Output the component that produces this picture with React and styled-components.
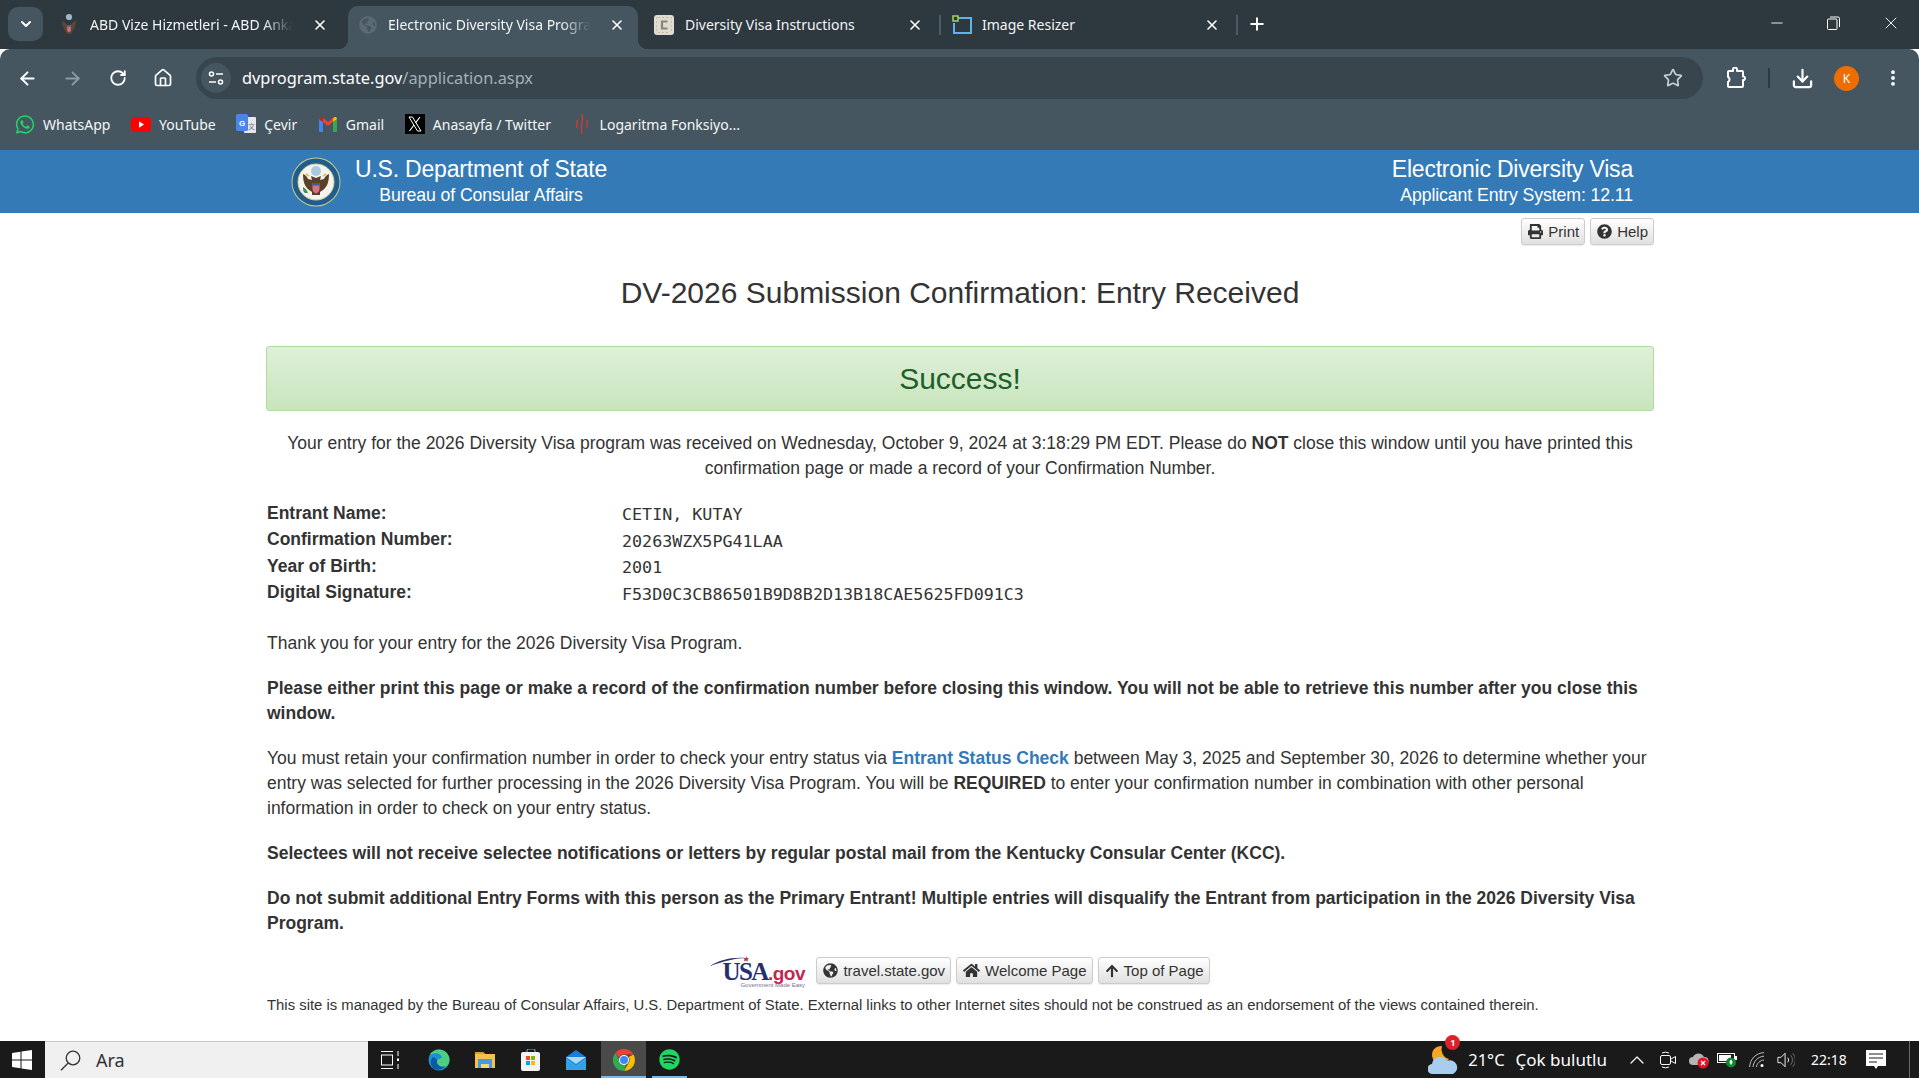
import React from "react";
import styled, { createGlobalStyle } from "styled-components";
import { FaPrint, FaQuestionCircle, FaGlobeAmericas, FaHome, FaArrowUp, FaWhatsapp, FaSpotify } from "react-icons/fa";
import { ArrowLeft, ArrowRight, RotateCw, House, Star, Download, ChevronDown, ChevronUp, X, Plus, Minus, EllipsisVertical } from "lucide-react";

const Global = createGlobalStyle`
  html, body { margin: 0; padding: 0; height: 100%; background: #fff; overflow: hidden; }
  * { box-sizing: border-box; }
  #root { height: 100%; }
`;

const Screen = styled.div`
  width: 1919px; height: 1078px; display: flex; flex-direction: column; overflow: hidden;
  font-family: "Liberation Sans", Arial, sans-serif; color: #333;
`;

/* ---------- browser chrome ---------- */
const TabStrip = styled.div`
  height: 49px; flex: none; background: #2e383f; display: flex; align-items: flex-start;
  padding-left: 8px; font-family: "Noto Sans", sans-serif; color: #fff;
`;
const TabMenu = styled.div`
  width: 35px; height: 34px; margin: 7px 5px 0 0; border-radius: 10px; background: #455661;
  display: flex; align-items: center; justify-content: center; flex: none;
`;
const Tab = styled.div`
  position: relative; width: ${p => p.$w}px; height: 43px; margin-top: 6px; margin-left: ${p => p.$ml || 0}px; flex: none;
  display: flex; align-items: center; padding: 0 ${p => p.$pr}px 6px ${p => p.$pad}px; gap: ${p => p.$gap}px;
  border-radius: 10px 10px 0 0; background: ${p => (p.$active ? "#455661" : "transparent")};
  ${p => p.$active && `
    &::before, &::after { content: ""; position: absolute; bottom: 0; width: 10px; height: 10px; }
    &::before { left: -10px; background: radial-gradient(circle at 0 0, #2e383f 10px, #455661 10.5px); }
    &::after { right: -10px; background: radial-gradient(circle at 100% 0, #2e383f 10px, #455661 10.5px); }
  `}
  ${p => p.$sep && `
    &::after { content: ""; position: absolute; right: 0; top: 9px; width: 2px; height: 20px; background: #4a5b66; }
  `}
`;
const TabIcon = styled.span`
  width: 20px; height: 20px; flex: none; display: flex; align-items: center; justify-content: center;
`;
const TabTitle = styled.span`
  flex: 1; min-width: 0; white-space: nowrap; overflow: hidden; font-size: 14px; color: #f2f4f5;
  mask-image: ${p => (p.$fade ? "linear-gradient(90deg, #000 82%, transparent 96%)" : "none")};
`;
const TabClose = styled(X)`flex: none; color: #fff;`;
const NewTab = styled.div`
  width: 38px; height: 34px; margin-top: 7px; display: flex; align-items: center; justify-content: center;
`;
const WindowControls = styled.div`
  margin-left: auto; display: flex; height: 46px;
`;
const WinButton = styled.div`
  width: 57px; height: 46px; display: flex; align-items: center; justify-content: center; color: #fff;
`;

const Toolbar = styled.div`
  height: 58px; flex: none; background: #455661; border-radius: 10px 10px 0 0;
  display: flex; align-items: center; color: #fff; padding-left: 15px;
  font-family: "Noto Sans", sans-serif;
`;
const NavButton = styled.div`
  width: 45px; height: 34px; display: flex; align-items: center; justify-content: center; flex: none;
  color: ${p => (p.$off ? "#8e9aa2" : "#fff")};
`;
const NavGroup = styled.div`display: flex; margin-left: -10px;`;
const Omnibox = styled.div`
  width: 1507px; height: 42px; margin-left: 11px; border-radius: 21px; background: #38454d; flex: none;
  display: flex; align-items: center; padding: 0 20px 0 5px;
`;
const SiteChip = styled.div`
  width: 30px; height: 30px; border-radius: 50%; background: #455661; display: flex; align-items: center; justify-content: center; flex: none;
`;
const Url = styled.div`
  margin-left: 11px; font-size: 16.35px; color: #fff; flex: 1; white-space: nowrap;
  span { color: #a5afb6; }
`;
const ActionRow = styled.div`
  display: flex; align-items: center; margin-left: 15px;
`;
const ToolDivider = styled.div`width: 2px; height: 20px; background: #2e383f; margin: 0 ${p => p.$m || 0}px;`;
const Avatar = styled.div`
  width: 25px; height: 25px; border-radius: 50%; background: #ef6c00; color: #fff; font-size: 12px;
  display: flex; align-items: center; justify-content: center; margin: 0 24px 0 0; flex: none;
`;
const ActionSlot = styled.div`
  width: ${p => p.$w}px; display: flex; align-items: center; justify-content: center; flex: none;
`;

const Bookmarks = styled.div`
  height: 43px; flex: none; background: #455661; display: flex; align-items: center; padding: 0 0 9px 15px;
  font-family: "Noto Sans", sans-serif; font-size: 14px; color: #f4f6f7;
`;
const Bookmark = styled.div`
  display: flex; align-items: center; gap: 8px; margin-right: 20.6px; white-space: nowrap;
`;
const BmIcon = styled.span`
  width: 20px; height: 20px; display: flex; align-items: center; justify-content: center; flex: none;
`;

/* ---------- page ---------- */
const Content = styled.main`flex: 1; min-height: 0; background: #fff; display: flex; flex-direction: column;`;
const SiteHeader = styled.header`
  height: 63px; flex: none; background: #337ab7; color: #fff; display: flex; align-items: center;
  justify-content: space-between; padding: 0 286px 0 291px;
`;
const Brand = styled.div`display: flex; align-items: center; gap: 14px;`;
const BrandText = styled.div`text-align: center; line-height: 1;`;
const BrandTitle = styled.div`font-size: 23px; line-height: 29px; margin-top: -2px; letter-spacing: -.2px;`;
const BrandSub = styled.div`font-size: 17.7px; line-height: 22px; letter-spacing: -.1px;`;
const SystemText = styled.div`text-align: right;`;

const Container = styled.div`width: 1388px; margin: 0 265px 0 266px; flex: 1; display: flex; flex-direction: column;`;
const TopActions = styled.div`display: flex; justify-content: flex-end; gap: 5px; margin-top: 5px; height: 27px;`;
const Btn = styled.a`
  height: 27px; display: inline-flex; align-items: center; gap: 5px; padding: 0 5px 0 6px; border: 1px solid #ccc;
  border-radius: 3px; background: linear-gradient(#fff, #e0e0e0); font-size: 15px; color: #333; white-space: nowrap;
  text-decoration: none; box-shadow: 0 1px 1px rgba(0,0,0,.08);
`;
const PageTitle = styled.h1`
  margin: 31px 0 0; font-size: 30px; line-height: 33px; font-weight: 400; text-align: center; color: #333;
`;
const SuccessPanel = styled.div`
  height: 65px; margin-top: 37px; border: 1px solid #b2dba1; border-radius: 3px;
  background: linear-gradient(#dff0d8, #c8e5bc); display: flex; align-items: center; justify-content: center;
  font-size: 30px; color: #1d5f2a;
`;
const Para = styled.p`
  margin: ${p => p.$mt ?? 20}px 0 0; font-size: 17.5px; line-height: 25px; color: #333; padding-left: ${p => (p.$center ? 0 : 1)}px;
  text-align: ${p => (p.$center ? "center" : "left")};
  font-weight: ${p => (p.$bold ? 700 : 400)};
`;
const Lead = styled(Para)`padding: 0 18px;`;
const DataTable = styled.dl`
  margin: 19px 0 0; padding-left: 1px; display: grid; grid-template-columns: 355px 1fr; grid-auto-rows: 26.5px; align-items: center;
`;
const DataLabel = styled.dt`font-size: 17.5px; font-weight: 700; color: #333;`;
const DataValue = styled.dd`
  margin: 0; font-family: "DejaVu Sans Mono", monospace; font-size: 16.7px; color: #333; padding-top: 2px;
`;
const Link = styled.a`color: #337ab7; font-weight: 700; text-decoration: none;`;
const FooterActions = styled.div`
  display: flex; align-items: center; justify-content: center; margin-top: 21px; gap: 5px; height: 27px;
`;
const Logo = styled.div`
  position: relative; width: 100px; height: 32px; margin-right: 1px; font-family: "Liberation Serif", serif; white-space: nowrap;
  svg { position: absolute; left: 0; top: 0; }
`;
const LogoWord = styled.div`
  position: absolute; left: 12px; top: 4px; font-size: 25px; line-height: 26px; letter-spacing: -1.5px; color: #26306f; font-weight: 700;
  span { color: #c2274f; font-family: "Liberation Sans", sans-serif; font-size: 19px; font-weight: 700; letter-spacing: -.5px; }
`;
const LogoTag = styled.div`
  position: absolute; left: 30px; top: 27px; font-size: 6px; line-height: 7px; color: #7a6f8f; font-family: "Liberation Sans", sans-serif;
`;
const Disclaimer = styled.p`margin: 12px 0 0; padding-left: 1px; font-size: 14.87px; line-height: 18px; color: #333; white-space: nowrap;`;

/* ---------- taskbar ---------- */
const Taskbar = styled.footer`
  height: 37px; flex: none; background: #1a1a1a; display: flex; align-items: stretch; color: #fff;
  font-family: "Noto Sans", sans-serif;
`;
const StartSlot = styled.div`width: 45px; display: flex; align-items: center; justify-content: center; flex: none; padding-right: 1px;`;
const SearchBox = styled.div`
  width: 323px; background: #f0f0f0; border-top: 1px solid #c8c8c8; display: flex; align-items: center; gap: 15px;
  padding-left: 15px; font-size: 18px; color: #333; flex: none;
`;
const TaskApp = styled.div`
  position: relative; width: ${p => p.$w}px; margin-left: ${p => p.$ml || 0}px; display: flex; align-items: center; justify-content: center; flex: none;
  background: ${p => (p.$active ? "#4a4a4a" : "transparent")};
  ${p => p.$run && `
    &::after { content: ""; position: absolute; left: 0; right: 0; bottom: 0; height: 2px; background: #76b9ed; }
  `}
`;
const Tray = styled.div`margin-left: auto; display: flex; align-items: center; flex: none;`;
const TraySlot = styled.div`
  position: relative; width: ${p => p.$w}px; margin-left: ${p => p.$ml || 0}px; display: flex; align-items: center; justify-content: center; flex: none;
`;
const Weather = styled.div`font-size: ${p => p.$size}px; color: #fff; white-space: nowrap; margin-left: ${p => p.$ml}px;`;
const Clock = styled.div`font-size: 14px; color: #fff; width: 68px; text-align: center; flex: none;`;
const WeatherBadge = styled.div`
  position: absolute; right: -2px; top: -10px; width: 15px; height: 15px; border-radius: 50%; background: #d9222a; color: #fff;
  font-size: 9px; font-weight: 700; display: flex; align-items: center; justify-content: center;
`;
const EdgeLine = styled.div`width: 1px; background: #6a6a6a; margin-left: 20px; margin-right: 9px; align-self: stretch;`;

/* ---------- drawings ---------- */
const Eagle = () => (
  <svg width="16" height="24" viewBox="0 0 18 26">
    <circle cx="9" cy="4" r="3.5" fill="#9db7c5" />
    <path d="M1 9c3 0 5 2 6 4h4c1-2 3-4 6-4-1 6-3 9-4 11l-2 3H7l-2-3C4 18 2 15 1 9z" fill="#5f4630" />
    <path d="M7 13h4v6a2 2 0 0 1-4 0z" fill="#c9767f" />
    <path d="M7 13h4v2H7z" fill="#3f5f9b" />
  </svg>
);
const CTile = () => (
  <svg width="20" height="20" viewBox="0 0 20 20">
    <rect width="20" height="20" rx="3" fill="#e2dcd0" />
    <path d="M2 3h1M2 7h1M2 11h1M2 15h1M17 3h1M17 7h1M17 11h1M17 15h1M5 2v1M9 2v1M13 2v1M5 17v1M9 17v1M13 17v1" stroke="#a89f8e" strokeWidth="1.2" />
    <path d="M13.5 6.5h-5.5v7h5.5" fill="none" stroke="#8b8577" strokeWidth="2.2" />
  </svg>
);
const ResizerIcon = () => (
  <svg width="20" height="20" viewBox="0 0 20 20" fill="none">
    <path d="M6 3h13v15H2V8" stroke="#5db4ec" strokeWidth="2" />
    <rect x="1" y="1" width="5" height="5" fill="#2e383f" stroke="#a6d15c" strokeWidth="1.5" />
  </svg>
);
const SiteInfoIcon = () => (
  <svg width="16" height="16" viewBox="0 0 16 16" fill="none" stroke="#fff" strokeWidth="1.5">
    <circle cx="3.5" cy="4" r="2" /><path d="M8 4h7" />
    <circle cx="12.5" cy="12" r="2" /><path d="M1 12h7" />
  </svg>
);
const PuzzleIcon = () => (
  <svg width="21" height="22" viewBox="0 0 21 22" fill="none" stroke="#fff" strokeWidth="2" strokeLinejoin="round">
    <path d="M3 4h4V2.600a2 2 0 0 1 4 0V4h5a1 1 0 0 1 1 1v4.500h1a2 2 0 0 1 0 3.500h-1v6a1 1 0 0 1-1 1H3a1 1 0 0 1-1-1v-4a2.500 2.500 0 0 0 1.500-2.500A2.500 2.500 0 0 0 2 10V5a1 1 0 0 1 1-1z" />
  </svg>
);
const YouTubeIcon = () => (
  <svg width="20" height="15" viewBox="0 0 20 15"><rect width="20" height="15" rx="4" fill="#f00" /><path d="M8 4.2l5 3.3-5 3.3z" fill="#fff" /></svg>
);
const TranslateIcon = () => (
  <svg width="20" height="20" viewBox="0 0 20 20">
    <rect x="8" y="3" width="12" height="16" rx="1" fill="#e6e8ea" />
    <rect width="12" height="17" rx="1.5" fill="#4a86e8" />
    <text x="3" y="12" fontSize="8" fontFamily="Liberation Sans" fontWeight="700" fill="#fff">G</text>
    <text x="12" y="15" fontSize="7" fontFamily="Noto Sans CJK SC" fill="#777">文</text>
  </svg>
);
const GmailIcon = () => (
  <svg width="18" height="15" viewBox="0 0 18 15">
    <path d="M0 2l4 3v10H1a1 1 0 0 1-1-1z" fill="#4285f4" />
    <path d="M18 2l-4 3v10h3a1 1 0 0 0 1-1z" fill="#34a853" />
    <path d="M4 5V1l5 4 5-4v4l-5 4z" fill="#ea4335" />
    <path d="M0 2c0-2 2-2.500 3-1.500L4 1.300V5z" fill="#c5221f" />
    <path d="M18 2c0-2-2-2.500-3-1.500L14 1.300V5z" fill="#fbbc04" />
  </svg>
);
const XIcon = () => (
  <svg width="20" height="20" viewBox="0 0 20 20">
    <rect width="20" height="20" fill="#000" />
    <path d="M4 3h3.500l8.500 14h-3.500z" fill="none" stroke="#fff" strokeWidth="1" />
    <path d="M15 3l-4.500 5.800M9 11l-4.500 6" stroke="#fff" strokeWidth="1.100" />
  </svg>
);
const WaveIcon = () => (
  <svg width="14" height="24" viewBox="0 0 14 24" fill="none" stroke="#d0392f" strokeWidth="1.400">
    <path d="M2 8c1 3-1 5 0 8" /><path d="M7 2c2 6-2 12 0 20" /><path d="M12 8c1 3-1 5 0 8" />
  </svg>
);
const Seal = () => (
  <svg width="50" height="50" viewBox="0 0 50 50">
    <circle cx="25" cy="25" r="24.500" fill="#c9c98a" />
    <circle cx="25" cy="25" r="23.500" fill="#1f5d8c" />
    <circle cx="25" cy="25" r="18" fill="#f4f3ee" stroke="#d6cf94" />
    <circle cx="25" cy="14" r="5" fill="#a8cbe0" />
    <path d="M12 17c3 1 4 3 5 5l4 1-1-4 5 2 5-2-1 4 4-1c1-2 2-4 5-5 0 8-2 13-6 16l-3 2v3h-8v-3l-3-2c-4-3-6-8-6-16z" fill="#5b4128" />
    <path d="M15 17l3 2M35 17l-3 2" stroke="#d8c65a" strokeWidth="2" />
    <path d="M21.500 26h7v6c0 2.500-1.500 3.500-3.500 4.500-2-1-3.500-2-3.500-4.500z" fill="#d7747f" />
    <path d="M21.500 26h7v2.500h-7z" fill="#3b5ba5" />
    <path d="M12 30c2 1 4 3 5 6h-3c-2-1-2-4-2-6z" fill="#3b8f52" />
  </svg>
);
const UsaSwoosh = () => (
  <svg width="100" height="32" viewBox="0 0 100 32">
    <path d="M0 11C10 5 20 2 36 3 26 3 14 6 0 11z" fill="#26306f" />
    <path d="M36 1l1 2 2 .3-1.500 1.300.4 2-1.900-1-1.900 1 .4-2L33.500 3.300 36 3z" fill="#c2274f" />
  </svg>
);
const WinLogo = () => (
  <svg width="20" height="20" viewBox="0 0 20 20" fill="#fff">
    <path d="M0 3l8.500-1.200v7.700H0zM9.500 1.600L20 0v9.500H9.500zM0 10.500h8.500v7.700L0 17zM9.500 10.500H20V20L9.500 18.400z" />
  </svg>
);
const SearchGlass = () => (
  <svg width="21" height="21" viewBox="0 0 21 21" fill="none" stroke="#333" strokeWidth="1.300">
    <circle cx="13" cy="8" r="6.800" /><path d="M8.200 13L1 20.300" />
  </svg>
);
const TaskViewIcon = () => (
  <svg width="20" height="20" viewBox="0 0 20 20" fill="none" stroke="#fff" strokeWidth="1">
    <path d="M1 1.500h12M1 18.500h12" /><rect x="1.500" y="5" width="11" height="10" />
    <path d="M18 1v5M18 14v5" /><rect x="17" y="8.500" width="2" height="2.500" fill="#fff" stroke="none" />
  </svg>
);
const EdgeIcon = () => (
  <svg width="22" height="22" viewBox="0 0 22 22">
    <circle cx="11" cy="11" r="10.500" fill="#1b8fcf" />
    <path d="M21.500 11a10.500 10.500 0 0 0-20-4.500C5 3 13 3 14 9c-3 0-6 2-5 6 1 3 6 5 10 2 1.500-1.500 2.500-3.500 2.500-6z" fill="#4ad080" />
    <path d="M9 11c-1 5 4 8 9 6-3 3-8 5-12 3-4-3-4-9-1-12 1 1 3 1 4 3z" fill="#0c59a4" />
  </svg>
);
const FolderIcon = () => (
  <svg width="20" height="20" viewBox="0 0 20 20">
    <path d="M0 2h8l2 2h10v14H0z" fill="#f5c04e" />
    <path d="M0 2h8l2 2H0z" fill="#d9a02c" />
    <path d="M3 9h14v9h-3v-4H6v4H3z" fill="#3f9de0" />
    <path d="M6 14h8v4H6z" fill="#f8d775" />
  </svg>
);
const StoreIcon = () => (
  <svg width="20" height="22" viewBox="0 0 20 22">
    <path d="M6 4V2a2 2 0 0 1 2-2h4a2 2 0 0 1 2 2v2" fill="none" stroke="#4aa7e0" strokeWidth="1.200" />
    <rect y="3" width="19" height="19" rx="2" fill="#f3f3f3" />
    <rect x="5" y="7" width="4" height="4" fill="#f25022" /><rect x="10" y="7" width="4" height="4" fill="#7fba00" />
    <rect x="5" y="12" width="4" height="4" fill="#00a4ef" /><rect x="10" y="12" width="4" height="4" fill="#ffb900" />
  </svg>
);
const MailIcon = () => (
  <svg width="20" height="20" viewBox="0 0 20 20">
    <path d="M0 7l10-7 10 7v13H0z" fill="#1c7ed6" />
    <path d="M0 7h20L10 14z" fill="#a8dcf5" />
    <path d="M0 8l10 7 10-7v12H0z" fill="#2ea3e8" />
  </svg>
);
const ChromeIcon = () => (
  <svg width="22" height="22" viewBox="0 0 22 22">
    <path d="M11 0a11 11 0 0 1 9.500 5.500H11A5.500 5.500 0 0 0 6 8.500L2.400 4A11 11 0 0 1 11 0z" fill="#ea4335" />
    <path d="M20.500 5.500A11 11 0 0 1 11 22l4.700-8.200A5.500 5.500 0 0 0 15.700 8z" fill="#fbbc04" />
    <path d="M11 22A11 11 0 0 1 2.400 4L7 12a5 5 0 0 0 6.500 2.700z" fill="#34a853" />
    <circle cx="11" cy="11" r="5" fill="#fff" /><circle cx="11" cy="11" r="4" fill="#4285f4" />
  </svg>
);
const WeatherIcon = () => (
  <svg width="30" height="30" viewBox="0 0 30 30">
    <path d="M14 1a9 9 0 1 0 7 13A10 10 0 0 1 14 1z" fill="#f5a623" />
    <path d="M5 29a5 5 0 0 1-1-10 8 8 0 0 1 15-3 6.500 6.500 0 0 1 6 13z" fill="#a9cdee" />
  </svg>
);
const MeetIcon = () => (
  <svg width="16" height="20" viewBox="0 0 16 20" fill="none" stroke="#fff" strokeWidth="1">
    <rect x=".5" y="5.500" width="10" height="9" rx="1.500" />
    <path d="M11 9l4.500-2.500v7L11 11" />
    <path d="M2 3a8 8 0 0 1 7 0M2 17a8 8 0 0 0 7 0" />
  </svg>
);
const CloudOff = () => (
  <svg width="21" height="18" viewBox="0 0 21 18">
    <path d="M5 14a4 4 0 0 1 0-8 6 6 0 0 1 11 0 4 4 0 0 1 1 8z" fill="#b5b5b5" />
    <circle cx="15" cy="12" r="5.500" fill="#e81123" />
    <path d="M13 10l4 4M17 10l-4 4" stroke="#fff" strokeWidth="1.300" />
  </svg>
);
const BatteryIcon = () => (
  <svg width="20" height="17" viewBox="0 0 20 17">
    <rect x=".5" y="2.500" width="17" height="9" fill="#1a1a1a" stroke="#fff" />
    <rect x="2" y="4" width="12" height="6" fill="#fff" />
    <rect x="18" y="5" width="2" height="4" fill="#fff" />
    <circle cx="14" cy="11.500" r="5" fill="#0b8a2f" />
    <path d="M14 8.500c2 1.500 2 3.500 0 5.500-2-2-2-4 0-5.500z" fill="#fff" />
  </svg>
);
const WifiIcon = () => (
  <svg width="16" height="16" viewBox="0 0 16 16" fill="none" stroke="#bdbdbd" strokeWidth="1">
    <path d="M.6 15C1 7 7 1 15 .6M4 15c.4-5.500 5-10.500 11-10.800M7.500 15c.3-3.500 3.500-6.700 7.500-7" />
    <circle cx="13" cy="13.500" r="1.500" fill="#fff" stroke="none" />
  </svg>
);
const SpeakerIcon = () => (
  <svg width="20" height="18" viewBox="0 0 20 18" fill="none" stroke="#fff" strokeWidth="1">
    <path d="M1 6h3.500L9 1.500v15L4.500 12H1z" />
    <path d="M12 6.500a4 4 0 0 1 0 5" />
    <path d="M15 3.500a8 8 0 0 1 0 11M17.500 1.500a11 11 0 0 1 0 15" stroke="#777" />
  </svg>
);
const NotifyIcon = () => (
  <svg width="20" height="20" viewBox="0 0 20 20">
    <path d="M0 0h20v16h-8l-2 3-2-3H0z" fill="#fff" />
    <path d="M3 4h14M3 8h14M3 12h8" stroke="#1a1a1a" strokeWidth="1" />
  </svg>
);

const tabs = [
  { w: 300, pad: 11, pr: 20, gap: 11, title: "ABD Vize Hizmetleri - ABD Ankara", icon: <Eagle />, fade: true },
  { w: 290, pad: 10, pr: 13, gap: 10, title: "Electronic Diversity Visa Program", icon: <FaGlobeAmericas size={18} color="#5d6a73" />, fade: true, active: true },
  { w: 297, pad: 10, pr: 18, gap: 11, ml: 6, title: "Diversity Visa Instructions", icon: <CTile />, sep: true },
  { w: 297, pad: 11, pr: 18, gap: 10, title: "Image Resizer", icon: <ResizerIcon />, sep: true },
];

const marks = [
  { label: "WhatsApp", icon: <FaWhatsapp size={21} color="#25d366" /> },
  { label: "YouTube", icon: <YouTubeIcon /> },
  { label: "Çevir", icon: <TranslateIcon /> },
  { label: "Gmail", icon: <GmailIcon /> },
  { label: "Anasayfa / Twitter", icon: <XIcon /> },
  { label: "Logaritma Fonksiyo...", icon: <WaveIcon /> },
];

export default function App() {
  return (
    <Screen>
      <Global />
      <TabStrip>
        <TabMenu><ChevronDown size={16} strokeWidth={3} /></TabMenu>
        {tabs.map(t => (
          <Tab key={t.title} $w={t.w} $pad={t.pad} $pr={t.pr} $gap={t.gap} $ml={t.ml} $active={t.active} $sep={t.sep}>
            <TabIcon>{t.icon}</TabIcon>
            <TabTitle $fade={t.fade}>{t.title}</TabTitle>
            <TabClose size={16} strokeWidth={2.4} />
          </Tab>
        ))}
        <NewTab><Plus size={20} strokeWidth={2.4} /></NewTab>
        <WindowControls>
          <WinButton><Minus size={18} strokeWidth={1.2} /></WinButton>
          <WinButton>
            <svg width="13" height="14" viewBox="0 0 13 14" fill="none" stroke="#fff"><rect x=".5" y="3" width="9.500" height="10.500" rx="1" /><path d="M3 1h8a1.500 1.500 0 0 1 1.500 1.500V11" /></svg>
          </WinButton>
          <WinButton><X size={20} strokeWidth={1.1} /></WinButton>
        </WindowControls>
      </TabStrip>

      <Toolbar>
        <NavGroup>
          <NavButton><ArrowLeft size={21} strokeWidth={2.2} /></NavButton>
          <NavButton $off><ArrowRight size={21} strokeWidth={2.2} /></NavButton>
          <NavButton><RotateCw size={18} strokeWidth={2.4} /></NavButton>
          <NavButton><House size={20} strokeWidth={2} /></NavButton>
        </NavGroup>
        <Omnibox>
          <SiteChip><SiteInfoIcon /></SiteChip>
          <Url>dvprogram.state.gov<span>/application.aspx</span></Url>
          <Star size={20} color="#c9cfd3" strokeWidth={2} />
        </Omnibox>
        <ActionRow>
          <ActionSlot $w={36}><PuzzleIcon /></ActionSlot>
          <ToolDivider $m={14} />
          <ActionSlot $w={36}><Download size={23} strokeWidth={2.3} /></ActionSlot>
          <ActionSlot $w={14} />
          <Avatar>K</Avatar>
          <ActionSlot $w={20}><EllipsisVertical size={22} strokeWidth={2.6} /></ActionSlot>
        </ActionRow>
      </Toolbar>

      <Bookmarks>
        {marks.map(m => (
          <Bookmark key={m.label}><BmIcon>{m.icon}</BmIcon>{m.label}</Bookmark>
        ))}
      </Bookmarks>

      <Content>
        <SiteHeader>
          <Brand>
            <Seal />
            <BrandText>
              <BrandTitle>U.S. Department of State</BrandTitle>
              <BrandSub>Bureau of Consular Affairs</BrandSub>
            </BrandText>
          </Brand>
          <SystemText>
            <BrandTitle>Electronic Diversity Visa</BrandTitle>
            <BrandSub>Applicant Entry System: 12.11</BrandSub>
          </SystemText>
        </SiteHeader>
        <Container>
          <TopActions>
            <Btn><FaPrint size={15} />Print</Btn>
            <Btn><FaQuestionCircle size={15} />Help</Btn>
          </TopActions>
          <PageTitle>DV-2026 Submission Confirmation: Entry Received</PageTitle>
          <SuccessPanel>Success!</SuccessPanel>
          <Lead $center $mt={20}>
            Your entry for the 2026 Diversity Visa program was received on Wednesday, October 9, 2024 at 3:18:29 PM EDT. Please do <b>NOT</b> close this window until you have printed this confirmation page or made a record of your Confirmation Number.
          </Lead>
          <DataTable>
            <DataLabel>Entrant Name:</DataLabel><DataValue>CETIN, KUTAY</DataValue>
            <DataLabel>Confirmation Number:</DataLabel><DataValue>20263WZX5PG41LAA</DataValue>
            <DataLabel>Year of Birth:</DataLabel><DataValue>2001</DataValue>
            <DataLabel>Digital Signature:</DataLabel><DataValue>F53D0C3CB86501B9D8B2D13B18CAE5625FD091C3</DataValue>
          </DataTable>
          <Para $mt={25}>Thank you for your entry for the 2026 Diversity Visa Program.</Para>
          <Para $bold>Please either print this page or make a record of the confirmation number before closing this window. You will not be able to retrieve this number after you close this window.</Para>
          <Para>
            You must retain your confirmation number in order to check your entry status via <Link>Entrant Status Check</Link> between May 3, 2025 and September 30, 2026 to determine whether your entry was selected for further processing in the 2026 Diversity Visa Program. You will be <b>REQUIRED</b> to enter your confirmation number in combination with other personal information in order to check on your entry status.
          </Para>
          <Para $bold>Selectees will not receive selectee notifications or letters by regular postal mail from the Kentucky Consular Center (KCC).</Para>
          <Para $bold>Do not submit additional Entry Forms with this person as the Primary Entrant! Multiple entries will disqualify the Entrant from participation in the 2026 Diversity Visa Program.</Para>
          <FooterActions>
            <Logo>
              <UsaSwoosh />
              <LogoWord>USA<span>.gov</span></LogoWord>
              <LogoTag>Government Made Easy</LogoTag>
            </Logo>
            <Btn><FaGlobeAmericas size={15} />travel.state.gov</Btn>
            <Btn><FaHome size={17} />Welcome Page</Btn>
            <Btn><FaArrowUp size={14} />Top of Page</Btn>
          </FooterActions>
          <Disclaimer>This site is managed by the Bureau of Consular Affairs, U.S. Department of State. External links to other Internet sites should not be construed as an endorsement of the views contained therein.</Disclaimer>
        </Container>
      </Content>

      <Taskbar>
        <StartSlot><WinLogo /></StartSlot>
        <SearchBox><SearchGlass />Ara</SearchBox>
        <TaskApp $w={44}><TaskViewIcon /></TaskApp>
        <TaskApp $w={46} $ml={4}><EdgeIcon /></TaskApp>
        <TaskApp $w={46}><FolderIcon /></TaskApp>
        <TaskApp $w={45}><StoreIcon /></TaskApp>
        <TaskApp $w={46}><MailIcon /></TaskApp>
        <TaskApp $w={45} $ml={2} $active $run><ChromeIcon /></TaskApp>
        <TaskApp $w={35} $ml={6} $run><FaSpotify size={21} color="#1ed760" /></TaskApp>
        <Tray>
          <TraySlot $w={30}><WeatherIcon /><WeatherBadge>1</WeatherBadge></TraySlot>
          <Weather $ml={10} $size={16.5}>21°C</Weather>
          <Weather $ml={11} $size={17}>Çok bulutlu</Weather>
          <TraySlot $w={40} $ml={10}><ChevronUp size={24} strokeWidth={1.2} /></TraySlot>
          <TraySlot $w={22}><MeetIcon /></TraySlot>
          <TraySlot $w={38}><CloudOff /></TraySlot>
          <TraySlot $w={20}><BatteryIcon /></TraySlot>
          <TraySlot $w={40}><WifiIcon /></TraySlot>
          <TraySlot $w={18}><SpeakerIcon /></TraySlot>
          <Clock>22:18</Clock>
          <TraySlot $w={26}><NotifyIcon /></TraySlot>
          <EdgeLine />
        </Tray>
      </Taskbar>
    </Screen>
  );
}
